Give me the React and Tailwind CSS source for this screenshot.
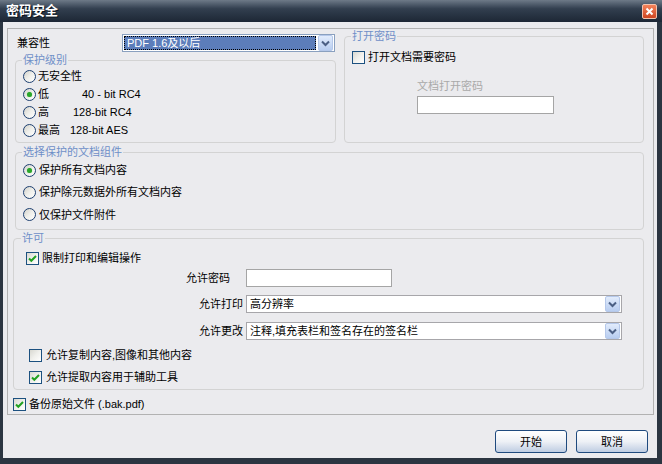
import React from "react";

function Radio({ checked }) {
  return (
    <span className="w-[13px] h-[13px] shrink-0 rounded-full border border-[#1d3f70] bg-linear-to-br from-[#d2d1ca] via-[#efefeb] to-white flex items-center justify-center">
      {checked && <span className="w-[5px] h-[5px] rounded-full bg-[#2aa52a] shadow-[0_0_1px_#6fd36f]" />}
    </span>
  );
}

function Checkbox({ checked }) {
  return (
    <span className="w-[13px] h-[13px] shrink-0 border border-[#1c5180] bg-linear-to-br from-[#d8d8d1] via-[#f0f0ec] to-white flex items-center justify-center">
      {checked && (
        <svg width="11" height="11" viewBox="0 0 11 11">
          <path d="M2 5.5 L4.3 7.8 L9 3" fill="none" stroke="#21a121" strokeWidth="2" />
        </svg>
      )}
    </span>
  );
}

function Arrow() {
  return (
    <span className="w-[15px] h-[16px] shrink-0 rounded-[2px] border border-[#b5c8ea] bg-linear-to-b from-[#e2ecfc] to-[#b8cdf0] flex items-center justify-center">
      <svg width="9" height="7" viewBox="0 0 9 7">
        <path d="M1 1.5 L4.5 5 L8 1.5" fill="none" stroke="#4b5f84" strokeWidth="2" />
      </svg>
    </span>
  );
}

function Group({ title, className, children }) {
  return (
    <fieldset className={"border border-[#d3d3d3] rounded-[4px] pl-[6px] " + className}>
      <legend className="px-[1px] leading-[14px] text-[#6f8fc8]">{title}</legend>
      {children}
    </fieldset>
  );
}

function Select({ value, className }) {
  return (
    <div className={"h-[18px] border border-[#a7a6aa] bg-white flex items-center p-[1px] " + className}>
      <span className="flex-1 pl-[2px] leading-[14px]">{value}</span>
      <Arrow />
    </div>
  );
}

export default function App() {
  return (
    <div className="w-[662px] h-[464px] bg-[#2b3541] flex flex-col font-['Liberation_Sans','Noto_Sans_CJK_SC',sans-serif] text-[11px] leading-[14px] text-black">
      {/* title bar */}
      <div className="h-[22px] shrink-0 flex items-center justify-between pl-[6px] pr-[5px] bg-linear-to-b from-[#6e7a88] via-[#323f4f] via-40% to-[#1d2735]">
        <span className="text-white font-bold text-[13px] [text-shadow:1px_1px_#0b121b]">密码安全</span>
        <span className="w-[15px] h-[15px] rounded-[2px] border border-[#f3c2ad] bg-linear-to-b from-[#f3825a] to-[#cf4520] flex items-center justify-center">
          <svg width="9" height="9" viewBox="0 0 9 9">
            <path d="M1.5 1.5 L7.5 7.5 M7.5 1.5 L1.5 7.5" stroke="white" strokeWidth="2" />
          </svg>
        </span>
      </div>

      {/* body */}
      <div className="flex-1 ml-[3px] mr-[5px] mb-[6px] bg-[#ebebee] flex flex-col">
        <div className="mt-[6px] ml-[4px] mr-[3px] border border-[#b2b2b2] flex flex-col pb-[1px]">
          {/* top row */}
          <div className="flex items-start ml-[7px] gap-[8px]">
            <div className="w-[321px] flex flex-col">
              <div className="mt-[5px] flex items-center h-[18px]">
                <span className="ml-[2px] w-[105px]">兼容性</span>
                <div className="w-[213px] h-[18px] border border-[#8aa0bf] bg-white flex items-center p-[1px]">
                  <span className="flex-1 h-[14px] bg-[#5c7dba] border border-dotted border-black text-white leading-[12px] pl-[2px]">PDF 1.6及以后</span>
                  <span className="ml-[2px]"><Arrow /></span>
                </div>
              </div>
              <Group title="保护级别" className="mt-[1px] pb-[3px]">
                <div className="flex items-center h-[18px] ml-[1px] gap-[2px]">
                  <Radio />
                  <span>无安全性</span>
                </div>
                <div className="flex items-center h-[18px] ml-[1px] gap-[2px]">
                  <Radio checked />
                  <span className="w-[42px]">低</span>
                  <span>40 - bit RC4</span>
                </div>
                <div className="flex items-center h-[18px] ml-[1px] gap-[2px]">
                  <Radio />
                  <span className="w-[33px]">高</span>
                  <span>128-bit RC4</span>
                </div>
                <div className="flex items-center h-[18px] ml-[1px] gap-[2px]">
                  <Radio />
                  <span className="w-[30px]">最高</span>
                  <span>128-bit AES</span>
                </div>
              </Group>
            </div>

            <Group title="打开密码" className="w-[300px] h-[114px]">
              <div className="mt-[5px] flex items-center h-[18px] ml-[1px] gap-[3px]">
                <Checkbox />
                <span>打开文档需要密码</span>
              </div>
              <div className="mt-[13px] ml-[66px] text-[#a9a9a9]">文档打开密码</div>
              <div className="mt-[3px] ml-[66px] w-[137px] h-[18px] border border-[#a5a5a5] bg-white" />
            </Group>
          </div>

          {/* components */}
          <Group title="选择保护的文档组件" className="mt-[2px] ml-[7px] w-[629px] pb-[3px]">
            <div className="flex items-center h-[22px] ml-[1px] gap-[3px]">
              <Radio checked />
              <span>保护所有文档内容</span>
            </div>
            <div className="flex items-center h-[22px] ml-[1px] gap-[3px]">
              <Radio />
              <span>保护除元数据外所有文档内容</span>
            </div>
            <div className="flex items-center h-[23px] ml-[1px] gap-[3px]">
              <Radio />
              <span>仅保护文件附件</span>
            </div>
          </Group>

          {/* permissions */}
          <fieldset className="mt-[1px] ml-[5px] w-[631px] border border-[#d3d3d3] rounded-[4px] pl-[7px] pb-[3px]">
            <legend className="px-[1px] leading-[14px] text-[#6f8fc8]">许可</legend>
            <div className="mt-[4px] flex items-center h-[18px] ml-[5px] gap-[3px]">
              <Checkbox checked />
              <span>限制打印和编辑操作</span>
            </div>
            <div className="mt-[2px] flex items-center h-[18px]">
              <span className="w-[225px] text-right pr-[16px]">允许密码</span>
              <div className="w-[146px] h-[18px] border border-[#a5a5a5] bg-white" />
            </div>
            <div className="mt-[8px] flex items-center h-[18px]">
              <span className="w-[225px] text-right pr-[3px]">允许打印</span>
              <Select value="高分辨率" className="w-[376px]" />
            </div>
            <div className="mt-[9px] flex items-center h-[18px]">
              <span className="w-[225px] text-right pr-[3px]">允许更改</span>
              <Select value="注释,填充表栏和签名存在的签名栏" className="w-[376px]" />
            </div>
            <div className="mt-[6px] flex items-center h-[18px] ml-[8px] gap-[4px]">
              <Checkbox />
              <span>允许复制内容,图像和其他内容</span>
            </div>
            <div className="mt-[4px] flex items-center h-[18px] ml-[8px] gap-[4px]">
              <Checkbox checked />
              <span>允许提取内容用于辅助工具</span>
            </div>
          </fieldset>

          <div className="mt-[5px] flex items-center h-[18px] ml-[5px] gap-[3px]">
            <Checkbox checked />
            <span>备份原始文件 (.bak.pdf)</span>
          </div>
        </div>

        {/* buttons */}
        <div className="mt-[15px] flex justify-end gap-[9px] pr-[9px]">
          <button className="w-[72px] h-[23px] rounded-[3px] border border-[#1f4a7e] bg-linear-to-b from-white via-[#eef1f6] to-[#bfcde2] leading-[14px]">开始</button>
          <button className="w-[72px] h-[23px] rounded-[3px] border border-[#1f4a7e] bg-linear-to-b from-white via-[#eef1f6] to-[#bfcde2] leading-[14px]">取消</button>
        </div>
      </div>
    </div>
  );
}
